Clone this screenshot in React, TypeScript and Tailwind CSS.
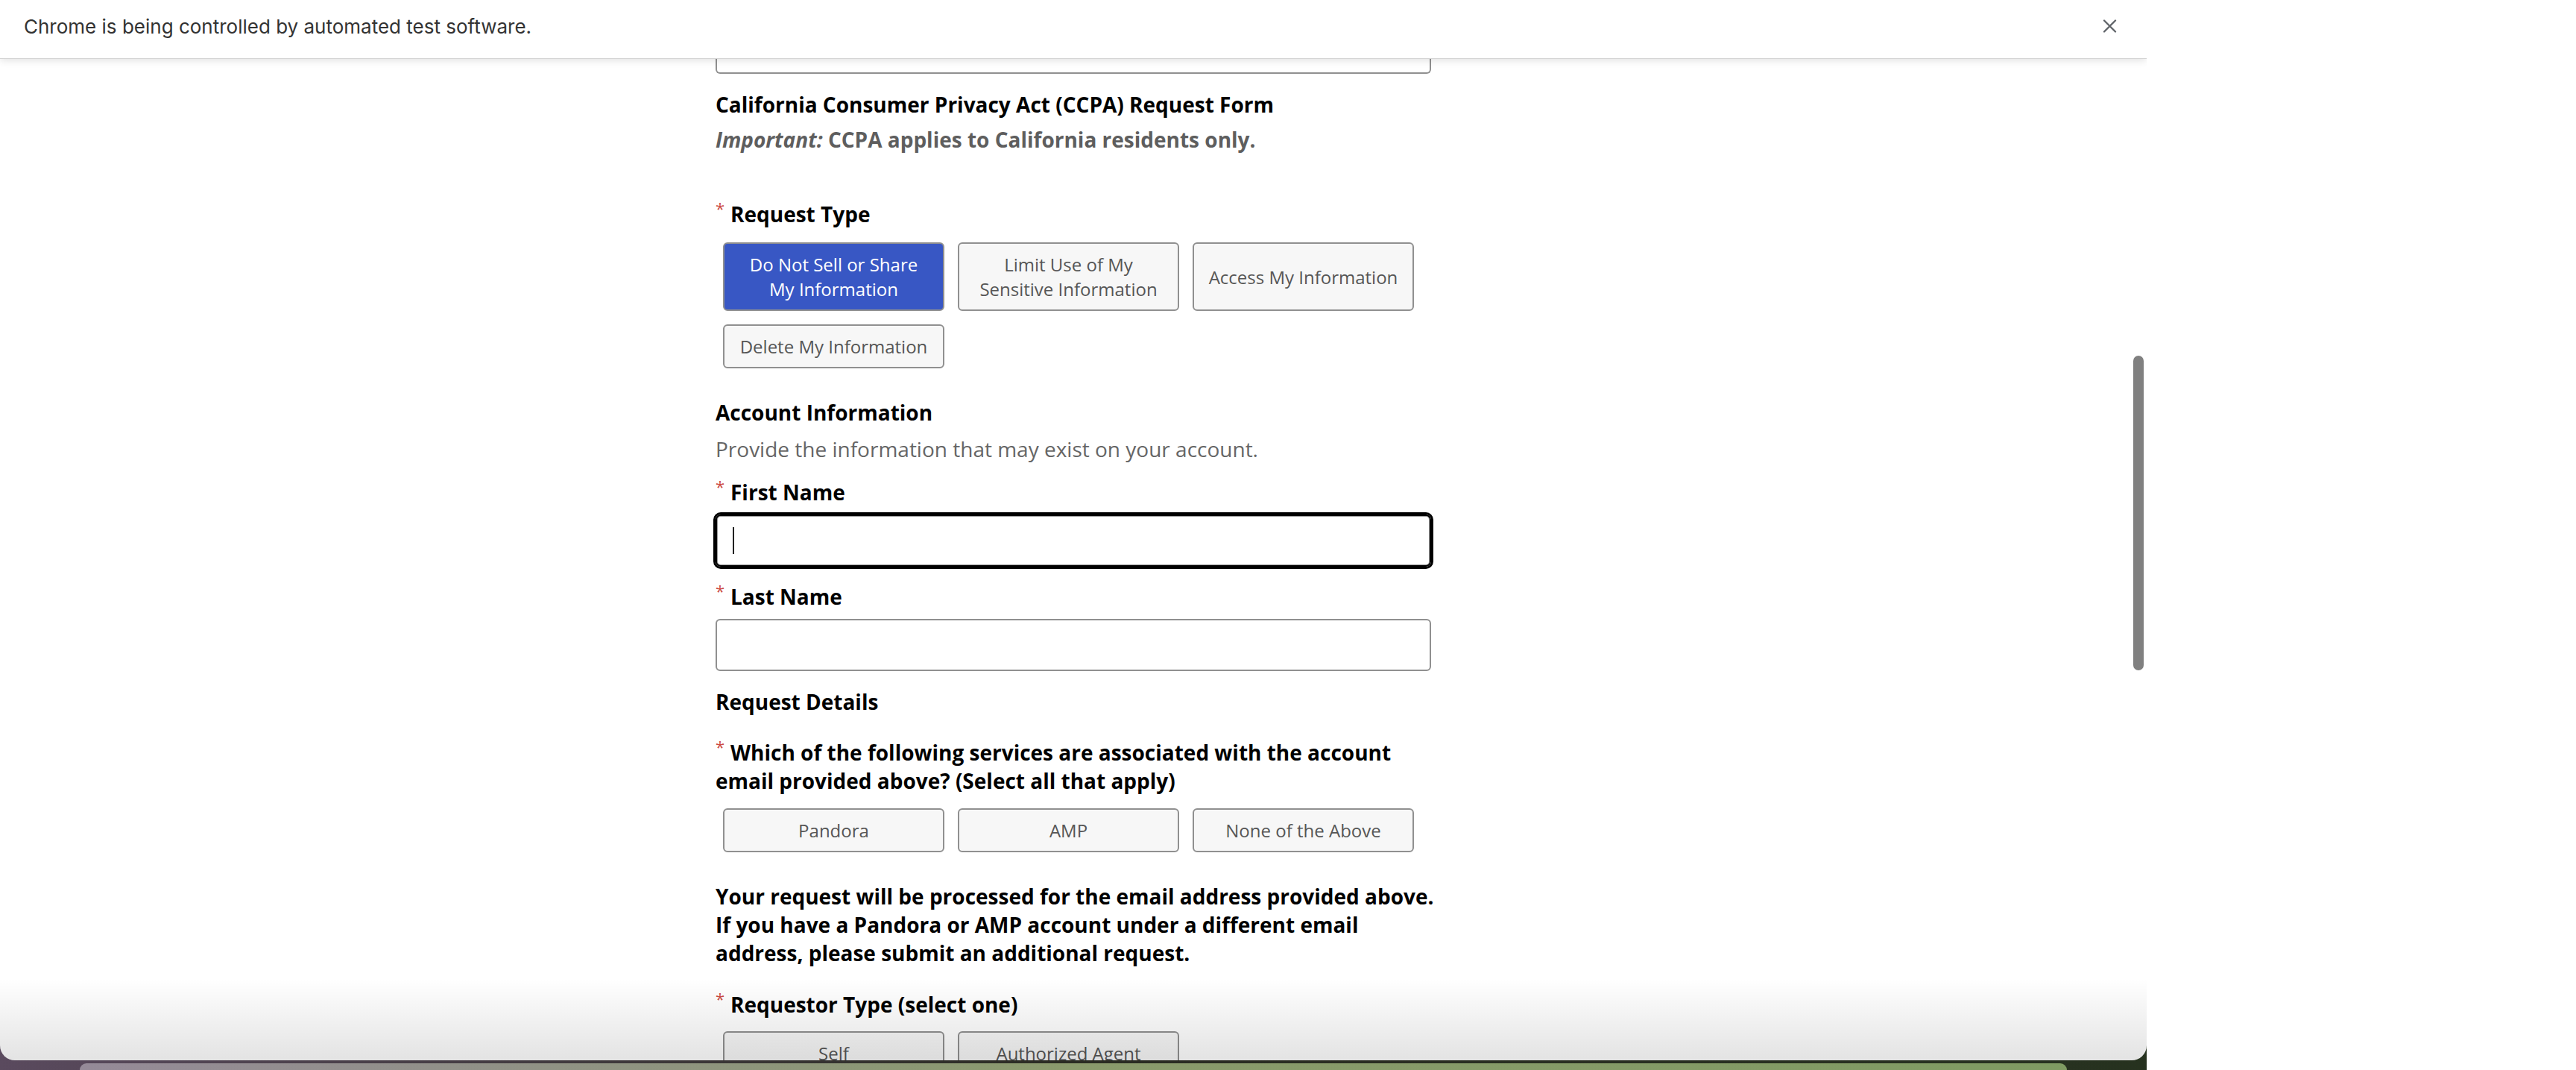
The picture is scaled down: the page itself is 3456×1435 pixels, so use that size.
import clsx from "clsx";

const REQUEST_TYPES = [
  { lines: ["Do Not Sell or Share", "My Information"], active: true },
  { lines: ["Limit Use of My", "Sensitive Information"], active: false },
  { lines: ["Access My Information"], active: false },
  { lines: ["Delete My Information"], active: false },
];

const SERVICES = [{ lines: ["Pandora"] }, { lines: ["AMP"] }, { lines: ["None of the Above"] }];

const REQUESTORS = [{ lines: ["Self"] }, { lines: ["Authorized Agent"] }];

function Required({ children, className }: { children: React.ReactNode; className?: string }) {
  return (
    <div className={clsx("text-[28px] leading-[38px] font-bold text-black", className)}>
      <span className="inline-block align-top w-[20px] text-[22px] leading-[22px] font-normal text-[#cc4b44]">*</span>
      {children}
    </div>
  );
}

function Choice({ lines, active }: { lines: string[]; active?: boolean }) {
  return (
    <button
      type="button"
      className={clsx(
        "w-[297px] flex flex-col items-center justify-center rounded-[6px] border-2 border-[#909090] px-[12px] py-[11px] text-[24px] leading-[33px]",
        active ? "bg-[#3857c4] text-white" : "bg-[#f7f7f7] text-[#565656]"
      )}
    >
      {lines.map((l) => (
        <span key={l} className="whitespace-nowrap">
          {l}
        </span>
      ))}
    </button>
  );
}

function ChoiceGroup({ items, className }: { items: { lines: string[]; active?: boolean }[]; className?: string }) {
  return (
    <div className={clsx("flex flex-wrap gap-[18px] pl-[10px]", className)}>
      {items.map((it) => (
        <Choice key={it.lines.join(" ")} lines={it.lines} active={it.active} />
      ))}
    </div>
  );
}

function Infobar() {
  return (
    <div className="relative z-10 h-[78px] shrink-0 flex items-center justify-between pl-[32px] pr-[40px] pb-[8px] bg-white shadow-[0_1px_0_#d4d4d4,0_3px_10px_rgba(0,0,0,0.12)] font-['Inter',sans-serif]">
      <span className="text-[26px] text-[#333333]">Chrome is being controlled by automated test software.</span>
      <svg width="19" height="18" viewBox="0 0 19 18" className="mt-[-1px]">
        <path d="M2 1.5 L17 16.5 M17 1.5 L2 16.5" stroke="#5f6368" strokeWidth="2.3" strokeLinecap="round" />
      </svg>
    </div>
  );
}

function Form() {
  return (
    <div className="w-[960px] mx-auto flex flex-col font-['Open_Sans',sans-serif]">
      {/* bottom of the field cut off by the infobar */}
      <div className="h-[21px] rounded-b-[6px] border-2 border-t-0 border-[#909090]" />

      <div className="mt-[22px] text-[28px] leading-[38px] font-bold text-black">
        California Consumer Privacy Act (CCPA) Request Form
      </div>
      <div className="mt-[9px] text-[28px] leading-[38px] font-bold text-[#5e5e5e]">
        <em>Important:</em> CCPA applies to California residents only.
      </div>

      <Required className="mt-[62px]">Request Type</Required>
      <ChoiceGroup items={REQUEST_TYPES} className="mt-[19px]" />

      <div className="mt-[40px] text-[28px] leading-[38px] font-bold text-black">Account Information</div>
      <div className="mt-[11px] text-[28px] leading-[38px] text-[#666666]">
        Provide the information that may exist on your account.
      </div>

      <Required className="mt-[20px]">First Name</Required>
      <div className="mt-[11px] h-[70px] rounded-[7px] border-2 border-black outline-[3px] outline-black bg-white shadow-[inset_0_0_0_1px_#9a9a9a] flex items-center pl-[21px]">
        <span className="w-[2px] h-[36px] bg-[#222222]" />
      </div>

      <Required className="mt-[21px]">Last Name</Required>
      <div className="mt-[11px] h-[70px] rounded-[6px] border-2 border-[#909090] bg-white" />

      <div className="mt-[22px] text-[28px] leading-[38px] font-bold text-black">Request Details</div>

      <Required className="mt-[30px]">
        <span className="whitespace-nowrap">Which of the following services are associated with the account</span>
        <br />
        <span className="whitespace-nowrap">email provided above? (Select all that apply)</span>
      </Required>
      <ChoiceGroup items={SERVICES} className="mt-[18px]" />

      <div className="mt-[40px] text-[28px] leading-[38px] font-bold text-black">
        <div className="whitespace-nowrap">Your request will be processed for the email address provided above.</div>
        <div className="whitespace-nowrap">If you have a Pandora or AMP account under a different email</div>
        <div className="whitespace-nowrap">address, please submit an additional request.</div>
      </div>

      <Required className="mt-[31px]">Requestor Type (select one)</Required>
      <ChoiceGroup items={REQUESTORS} className="mt-[17px]" />
    </div>
  );
}

export default function App() {
  return (
    <div className="flex w-[3456px] h-[1435px] bg-white overflow-hidden">
      <div className="w-[2880px] h-[1435px] shrink-0 flex flex-col bg-gradient-to-r from-[#5a4a5e] via-[#2a2b22] to-[#26321f]">
        <div className="relative h-[1422px] shrink-0 rounded-b-[20px] overflow-hidden bg-white flex flex-col">
          <Infobar />
          <div className="flex-1 overflow-hidden">
            <Form />
          </div>

          {/* scrollbar thumb */}
          <div className="absolute left-[2862px] top-[477px] w-[14px] h-[422px] rounded-full bg-[#808080]" />

          {/* dock shade at the window bottom */}
          <div className="absolute inset-x-0 bottom-0 h-[110px] pointer-events-none bg-gradient-to-b from-transparent to-[rgba(0,0,0,0.11)]" />
        </div>

        {/* dock peeking from below */}
        <div className="flex-1 px-[107px] pt-[4px]">
          <div className="h-full rounded-t-[28px] bg-gradient-to-r from-[#958a98] via-[#8a9a6c] to-[#7f9b62]" />
        </div>
      </div>
      <div className="flex-1" />
    </div>
  );
}
